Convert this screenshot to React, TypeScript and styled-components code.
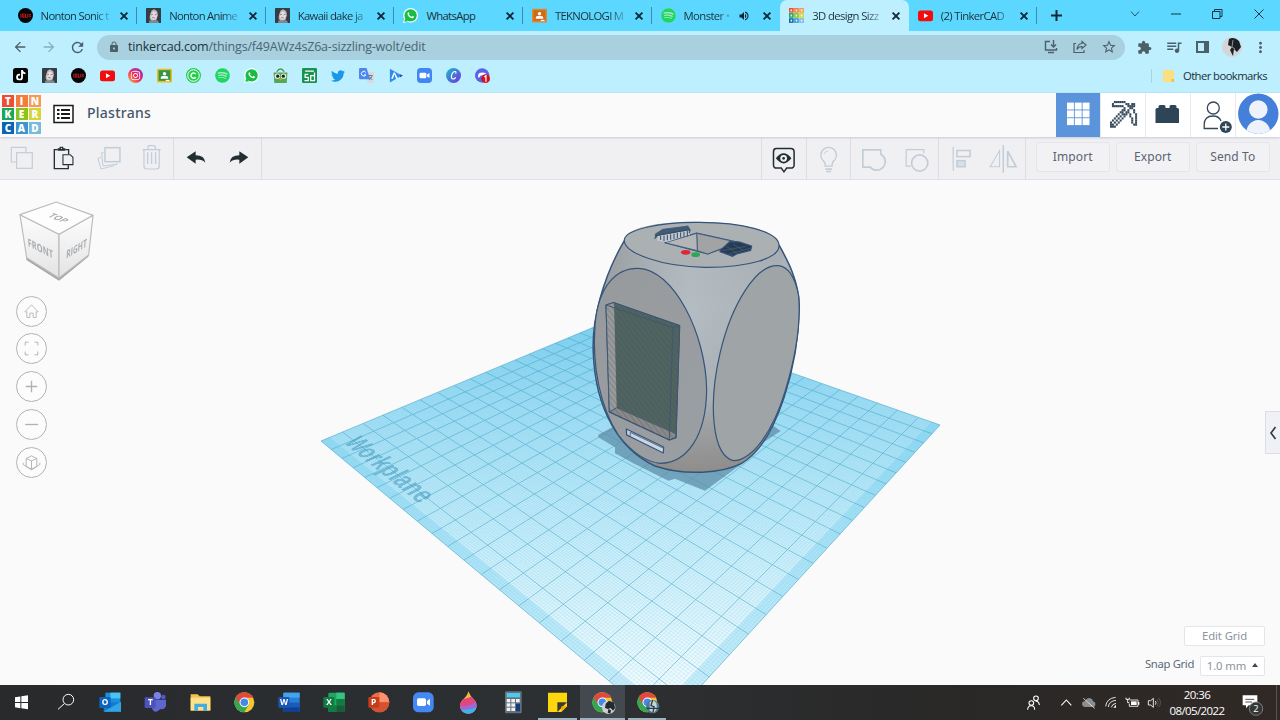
import React from "react";
import styled, { createGlobalStyle } from "styled-components";
import { FaInstagram, FaSpotify, FaTiktok, FaTwitter } from "react-icons/fa";
import { MdArrowBack, MdArrowForward, MdExtension, MdLock, MdMoreVert, MdQueueMusic, MdRefresh, MdStarBorder, MdVolumeUp } from "react-icons/md";

const Global = createGlobalStyle`
  * { box-sizing: border-box; }
  body { margin: 0; overflow: hidden; }
`;

const Screen = styled.div`
  width: 1280px;
  height: 720px;
  display: flex;
  flex-direction: column;
  overflow: hidden;
  background: #fafafa;
  font-family: "Open Sans", "Noto Sans", sans-serif;
  color: #1c3038;
`;

/* ---------- browser chrome ---------- */

const TabStrip = styled.div`
  height: 31px;
  flex: none;
  display: flex;
  padding-left: 8.6px;
  background: #5cd7ff;
`;

const TabBox = styled.div<{ $active?: boolean; $line?: boolean }>`
  width: 128.6px;
  height: 31px;
  display: flex;
  align-items: center;
  padding: 0 8px 0 9px;
  position: relative;
  background: ${(p) => (p.$active ? "#bdefff" : "transparent")};
  border-radius: 7px 7px 0 0;
  &::after {
    content: "";
    position: absolute;
    right: 0;
    top: 7px;
    height: 17px;
    width: 1px;
    background: ${(p) => (p.$line ? "#3c8da8" : "transparent")};
  }
`;

const Favicon = styled.span`
  width: 15px;
  height: 15px;
  margin-right: 8px;
  display: flex;
  flex: none;
`;

const TabTitle = styled.span<{ $fade: boolean; $gap: number }>`
  flex: 1;
  white-space: nowrap;
  font-size: 11.3px;
  line-height: 16px;
  letter-spacing: ${(p) => p.$gap}px;
  ${(p) => p.$fade && "mask-image: linear-gradient(90deg, #000 68%, rgba(0,0,0,.25) 88%);"}
`;

const WindowControls = styled.div`
  margin-left: auto;
  display: flex;
  align-items: center;
  height: 27px;
`;

const ControlCell = styled.span<{ $w: number }>`
  width: ${(p) => p.$w}px;
  display: flex;
  justify-content: center;
`;

const AudioCell = styled.span`
  width: 27px;
  display: flex;
  padding-left: 3px;
`;

const NewTab = styled.span`
  width: 38px;
  display: flex;
  align-items: center;
  justify-content: center;
`;

const AddressRow = styled.div`
  height: 32px;
  flex: none;
  display: flex;
  align-items: center;
  background: #bdefff;
  padding-left: 5px;
  color: #4c6069;
`;

const NavCell = styled.span<{ $w: number; $dim?: boolean }>`
  width: ${(p) => p.$w}px;
  display: flex;
  justify-content: center;
  opacity: ${(p) => (p.$dim ? 0.45 : 1)};
`;

const Omnibox = styled.div`
  width: 1028px;
  height: 25px;
  margin-left: 5px;
  border-radius: 13px;
  background: #a8d0df;
  display: flex;
  align-items: center;
  padding: 0 2px 0 11px;
`;

const Url = styled.span`
  flex: 1;
  margin-left: 8px;
  font-size: 12.5px;
  line-height: 18px;
  letter-spacing: -0.19px;
  color: #4b6571;
  b {
    font-weight: 400;
    color: #1d343e;
  }
`;

const Bookmarks = styled.div`
  height: 30px;
  flex: none;
  display: flex;
  align-items: center;
  padding: 0 13px 4px 6px;
  background: #bdefff;
  border-bottom: 1px solid #b4e8f8;
`;

const BookmarkCell = styled.span`
  width: 28.87px;
  display: flex;
  justify-content: center;
`;

const OtherBookmarks = styled.span`
  margin-left: auto;
  height: 14px;
  padding-left: 11px;
  border-left: 1px solid #9bd8ea;
  display: flex;
  align-items: center;
  gap: 9px;
  font-size: 11.3px;
  letter-spacing: -0.58px;
  white-space: nowrap;
`;

/* ---------- editor ---------- */

const Header = styled.header`
  height: 44px;
  flex: none;
  display: flex;
  align-items: center;
  background: #fafafa;
  position: relative;
  box-shadow: 0 1px 2px #c8cad6;
`;

const LogoGrid = styled.div`
  width: 39px;
  height: 39px;
  margin: -2px 12px 0 2px;
  display: grid;
  grid-template-columns: repeat(3, 12px);
  grid-auto-rows: 12px;
  gap: 1.5px;
`;

const LogoTile = styled.span<{ $c: string }>`
  background: ${(p) => p.$c};
  color: #fff;
  font: 800 10px/12.5px "Open Sans", sans-serif;
  text-align: center;
`;

const DesignName = styled.span`
  margin-left: 13px;
  margin-top: -5px;
  font: 500 14px/20px "Noto Sans", sans-serif;
  letter-spacing: 0.25px;
  color: #46566a;
`;

const HeaderCells = styled.div`
  margin-left: auto;
  display: flex;
  height: 44px;
`;

const HeaderCell = styled.span<{ $on?: boolean }>`
  width: 45px;
  height: 44px;
  border-right: 1px solid #e9eaef;
  background: ${(p) => (p.$on ? "#5b94da" : "#fff")};
  &:last-child {
    width: 44px;
    border: 0;
  }
`;

const Toolbar = styled.div`
  height: 43px;
  flex: none;
  display: flex;
  background: #f0f0f3;
  border-bottom: 1px solid #dfe1e8;
`;

const ToolGroup = styled.div<{ $push?: boolean; $w?: number }>`
  display: flex;
  width: ${(p) => (p.$w ? `${p.$w}px` : "auto")};
  margin-left: ${(p) => (p.$push ? "auto" : "0")};
  border-left: ${(p) => (p.$push ? "1px solid #dcdee5" : "0")};
  border-right: 1px solid #dcdee5;
`;

const Actions = styled.div`
  display: flex;
  gap: 5.5px;
  padding: 5px 10px 0 10px;
`;

const ActionButton = styled.button`
  width: 74.5px;
  height: 30px;
  padding: 0 0 1px;
  border: 1px solid #e4e6eb;
  border-radius: 3px;
  background: #f2f2f5;
  color: #5a6474;
  font: 12px "Noto Sans", sans-serif;
  letter-spacing: 0.1px;
`;

const Viewport = styled.main`
  height: 505px;
  flex: none;
  display: flex;
  justify-content: space-between;
  position: relative;
  background: #fafafa;
`;

const Scene = styled.svg`
  position: absolute;
  left: 0;
  top: 0;
`;

const PlaneLabel = styled.span`
  position: absolute;
  left: 0;
  top: 0;
  width: 1000px;
  height: 1000px;
  padding: 16px 0 0 44px;
  font: 700 61px/66px "Liberation Sans", sans-serif;
  letter-spacing: 0.5px;
  color: #3a93b8;
  opacity: 0.5;
  transform-origin: 0 0;
`;

const ViewControls = styled.nav`
  position: relative;
  width: 110px;
  padding: 20px 0 0 16px;
  display: flex;
  flex-direction: column;
  gap: 6.8px;
`;

const Cube = styled.svg`
  margin-bottom: -3.3px;
`;

const BottomControls = styled.div`
  position: relative;
  align-self: flex-end;
  padding-right: 15px;
  display: flex;
  flex-direction: column;
  align-items: flex-end;
  gap: 9.5px;
  padding-bottom: 9.5px;
  font: 11.3px "Noto Sans", sans-serif;
  letter-spacing: -0.1px;
  color: #5c6b7c;
`;

const GridBox = styled.span<{ $w: number }>`
  width: ${(p) => p.$w}px;
  height: 20px;
  display: flex;
  align-items: center;
  justify-content: center;
  gap: 6px;
  padding-bottom: 1px;
  border: 1px solid #e3e5ea;
  border-radius: 2px;
  background: #fff;
  color: #8b939d;
`;

const SnapRow = styled.div`
  display: flex;
  align-items: center;
  gap: 6px;
`;

const SnapLabel = styled.span`
  letter-spacing: -0.35px;
  margin-top: -4px;
`;

const PanelHandle = styled.span`
  position: absolute;
  right: 0;
  top: 231px;
  width: 15px;
  height: 43px;
  border: 1px solid #dcdee6;
  border-right: 0;
  background: #f0f1f4;
  display: flex;
  align-items: center;
  justify-content: center;
`;

/* ---------- taskbar ---------- */

const Taskbar = styled.footer`
  height: 35px;
  flex: none;
  display: flex;
  background: linear-gradient(90deg, #282a2c, #2d3033 45%, #292827 75%, #302926);
  color: #fff;
`;

const TaskCell = styled.span<{ $open?: boolean; $active?: boolean }>`
  width: 44.7px;
  height: 35px;
  flex: none;
  position: relative;
  background: ${(p) => (p.$active ? "#43494e" : "transparent")};
  &:first-child {
    margin-left: -1px;
  }
  &::after {
    content: "";
    position: absolute;
    bottom: 0;
    left: ${(p) => (p.$active ? 0 : 3)}px;
    right: ${(p) => (p.$active ? 0 : 3)}px;
    height: 2px;
    background: ${(p) => (p.$open ? "#9db4c0" : "transparent")};
  }
`;

const Tray = styled.div`
  margin-left: auto;
  display: flex;
  align-items: center;
`;

const TraySvg = styled.svg`
  margin-right: -4px;
`;

const Clock = styled.span`
  width: 64px;
  text-align: center;
  font-size: 11.5px;
  line-height: 16px;
  letter-spacing: -0.6px;
  white-space: nowrap;
`;

const Notification = styled.span`
  width: 47px;
  height: 35px;
`;

const DesktopEdge = styled.span`
  width: 4px;
  height: 35px;
  border-left: 1px solid #5b5654;
`;

/* ---------- small glyphs ---------- */

const Close = () => (
  <svg width="10" height="10" viewBox="0 0 10 10">
    <path d="M1.6 1.6 8.4 8.4M8.4 1.6 1.6 8.4" stroke="#0f2530" strokeWidth="1.8" />
  </svg>
);

const Glyph = ({ children, size = 15 }: { children: React.ReactNode; size?: number }) => (
  <svg width={size} height={size} viewBox="0 0 24 24">
    {children}
  </svg>
);

const Idlix = ({ size }: { size?: number }) => (
  <Glyph size={size}>
    <circle cx="12" cy="12" r="12" fill="#050505" />
    <path d="M4.500 9v6M7 9.500h2.500v5H7zM12 9v6h2M15.500 9v6M17.500 9.500l3 5M20.500 9.500l-3 5" stroke="#a5151b" strokeWidth="1.8" fill="none" />
  </Glyph>
);

const AnimeFace = ({ size }: { size?: number }) => (
  <Glyph size={size}>
    <rect width="24" height="24" rx="1" fill="#353c43" />
    <path d="M7 9 9 4l4-2 5 3 1 6-2 7-4 3H9l-3-4 0-4z" fill="#b9b9bd" />
    <path d="m8 9 4-4 4 2 2 4-2 6-4 2-4-3z" fill="#e6dcdd" />
    <path d="m8 11 3-1m3 1 3-1M10 15l4 1" stroke="#7c6468" strokeWidth="1.300" />
    <path d="m5 20 5 0 4-1 5 1 2 4H5z" fill="#85868d" />
  </Glyph>
);

const Youtube = ({ size }: { size?: number }) => (
  <Glyph size={size}>
    <rect y="4" width="24" height="17" rx="4" fill="#f40b0b" />
    <path d="m9.5 8.5 7 4-7 4z" fill="#fff" />
  </Glyph>
);

const WhatsApp = ({ size = 15 }: { size?: number }) => (
  <Glyph size={size}>
    <circle cx="12.2" cy="11.8" r="11.8" fill="#f5fff8" />
    <path d="m0 24 2-7 6 5z" fill="#f5fff8" />
    <circle cx="12.2" cy="11.8" r="9.8" fill="#18bd45" />
    <path d="m2 22 2-6 4 5z" fill="#18bd45" />
    <path d="M7.5 7.5c1-1.5 2-1 2.7.8.5 1-1 1.4-.6 2.2 1 1.8 2 2.7 3.8 3.5.9.4 1.3-1.7 2.2-1.3 2.1 1 2.6 1.3 1.7 2.6-2.7 3.5-12-2.8-9.8-7.8z" fill="#fff" />
  </Glyph>
);

const Classroom = ({ size, main, edge }: { size?: number; main: string; edge: string }) => (
  <Glyph size={size}>
    <rect y="1" width="24" height="22" rx="1.5" fill={edge} />
    <rect x="2.5" y="3.5" width="19" height="17" fill={main} />
    <circle cx="12" cy="9" r="2.7" fill="#fff" />
    <path d="M6 16q0-3.5 6-3.5t6 3.5v1H6z" fill="#fff" />
    <path d="M14 20h6" stroke="#fff" strokeWidth="2" />
  </Glyph>
);

const Spotify = ({ size = 15 }: { size?: number }) => (
  <Glyph size={size}>
    <circle cx="12" cy="12" r="11.500" fill="#a5e9c4" />
    <FaSpotify size={24} color="#1fd760" />
  </Glyph>
);

const tiles: [string, string][] = [
  ["T", "#f04d35"], ["I", "#f27e3d"], ["N", "#f59b57"],
  ["K", "#1ba757"], ["E", "#8cc518"], ["R", "#d2d63c"],
  ["C", "#0966b4"], ["A", "#3f96cf"], ["D", "#79badf"],
];

const TinkerMini = () => (
  <Glyph>
    {tiles.map(([, c], i) => (
      <g key={i}>
        <rect x={(i % 3) * 8.2} y={Math.floor(i / 3) * 8.2} width="7.4" height="7.4" fill={c} />
        <rect x={(i % 3) * 8.2 + 2.4} y={Math.floor(i / 3) * 8.2 + 2.2} width="2.6" height="3.2" fill="#fff" opacity=".85" />
      </g>
    ))}
  </Glyph>
);

const tabs = [
  { icon: <Idlix />, title: "Nonton Sonic t", fade: true, line: true, gap: -0.72 },
  { icon: <AnimeFace />, title: "Nonton Anime", fade: true, line: true, gap: -0.72 },
  { icon: <AnimeFace />, title: "Kawaii dake ja", fade: true, line: true, gap: -0.68 },
  { icon: <WhatsApp />, title: "WhatsApp", fade: false, line: true, gap: -0.65 },
  { icon: <Classroom main="#cf6a17" edge="#d88a36" />, title: "TEKNOLOGI M", fade: true, line: true, gap: -0.68 },
  { icon: <Spotify />, title: "Monster •", fade: true, line: false, gap: -0.6, audio: true },
  { icon: <TinkerMini />, title: "3D design Sizz", fade: true, line: false, gap: -0.6, active: true },
  { icon: <Youtube />, title: "(2) TinkerCAD", fade: true, line: true, gap: -0.62 },
];

const bookmarks = [
  <Glyph><rect width="24" height="24" rx="4" fill="#050505" /><g transform="translate(4 3)"><FaTiktok size={17} color="#fff" /></g></Glyph>,
  <AnimeFace />,
  <Idlix />,
  <Youtube />,
  <Glyph>
    <defs><linearGradient id="ig" x1="0" y1="1" x2="1" y2="0"><stop stopColor="#ffb52e" /><stop offset=".5" stopColor="#ee2864" /><stop offset="1" stopColor="#8a32d0" /></linearGradient></defs>
    <circle cx="12" cy="12" r="12" fill="url(#ig)" />
    <g transform="translate(3.5 3.5)"><FaInstagram size={17} color="#fff" /></g>
  </Glyph>,
  <Classroom main="#379447" edge="#efbb1e" />,
  <Glyph>
    <circle cx="12" cy="12" r="12" fill="#21cf4c" /><circle cx="12" cy="12" r="9.2" fill="none" stroke="#fff" strokeWidth="1.6" />
    <path d="M15.5 9.5a4.2 4.2 0 1 0 0 5.2" fill="none" stroke="#fff" strokeWidth="2.5" />
  </Glyph>,
  <Spotify />,
  <WhatsApp />,
  <Glyph>
    <path d="M6 6q6-9 12 0" fill="none" stroke="#3b8f44" strokeWidth="2" />
    <path d="M1 7h22l-1 17H2z" fill="#58a552" /><circle cx="7" cy="13" r="4.300" fill="#e9eee3" /><circle cx="17" cy="13" r="4.300" fill="#e9eee3" />
    <circle cx="7.500" cy="13" r="2.6" fill="#192b20" /><circle cx="16.500" cy="13" r="2.6" fill="#192b20" /><path d="m9.5 17 5 0-2.5 3z" fill="#f0a62f" />
  </Glyph>,
  <Glyph>
    <rect width="24" height="24" rx="2" fill="#14944f" />
    <path d="M10 10H5v5h5v5H4M20 7v13h-6v-8h6M5 5h14" fill="none" stroke="#fff" strokeWidth="2" />
  </Glyph>,
  <FaTwitter size={14} color="#1996ea" />,
  <Glyph>
    <path d="M9 6h13q2 0 2 2v14q0 2-2 2h-8z" fill="#d7dbdf" /><path d="M2 0h10l6 18H2q-2 0-2-2V2q0-2 2-2z" fill="#4b87ee" />
    <path d="M11 7.2a3.8 3.8 0 1 0 0 3.8H8" fill="none" stroke="#fff" strokeWidth="1.6" /><path d="M15 12h7m-4-1v2m3-1q-1 5-5 7m1-5 4 5" stroke="#63737e" strokeWidth="1.3" fill="none" />
  </Glyph>,
  <Glyph>
    <path d="M3 1 22 12 3 23z" fill="#2e8ce9" /><path d="m5 17 4-10h2l5 10h-3l-3-7-2 7z" fill="#fff" /><path d="M19 10l5 2-5 3z" fill="#1559a9" />
  </Glyph>,
  <Glyph><rect width="24" height="24" rx="6" fill="#4186f5" /><rect x="4" y="7.5" width="11" height="9" rx="2" fill="#fff" /><path d="m16 10.5 4-2.5v8l-4-2.5z" fill="#fff" /></Glyph>,
  <Glyph>
    <defs><linearGradient id="cv" x1="0" y1="0" x2="1" y2="1"><stop stopColor="#12c2cf" /><stop offset="1" stopColor="#7b2be0" /></linearGradient></defs>
    <circle cx="12" cy="12" r="12" fill="url(#cv)" />
    <path d="M15.5 9c1.5-4-2-4.500-4.500-1.500-3 3.500-3.500 9.500 0 10 2 .3 3.500-1 4.500-2.500" fill="none" stroke="#fff" strokeWidth="1.8" />
  </Glyph>,
  <Glyph>
    <circle cx="11.500" cy="12" r="11.500" fill="#5865e8" /><path d="M5 15q-1-5 2-7 5-2 10 0v5l-4-1-4 0-2 3z" fill="#fff" />
    <circle cx="17" cy="17" r="7" fill="#d3121e" /><path d="m15 14.500 2.500-2V22" fill="none" stroke="#fff" strokeWidth="2" />
  </Glyph>,
];

/* ---------- toolbar drawings ---------- */

const Tool = ({ x, w = 131, on, children }: { x: number; w?: number; on?: boolean; children: React.ReactNode }) => (
  <svg width={w / 3} height="42" viewBox={`${x} 141 ${w} 126`} fill="none" stroke={on ? "#222e31" : "#c3cdd7"} strokeWidth="3.6">
    {children}
  </svg>
);

const WideTool = ({ x, w, on, children }: { x: number; w: number; on?: boolean; children: React.ReactNode }) => (
  <svg width={w / 2.958} height="42" viewBox={`${x} 139 ${w} 124.200`} fill="none" stroke={on ? "#222e31" : "#c3cdd7"} strokeWidth="3.6">
    {children}
  </svg>
);

const LeftTools = () => (
  <>
    <ToolGroup $w={174}>
      <Tool x={0} w={130}><path d="M48 216H34v-44h44v14" /><rect x="50" y="188" width="47" height="47" /></Tool>
      <Tool x={130} w={130} on>
        <path d="M174 179h-10v57h42v-10M197 179h10v13" strokeWidth="4" /><path d="M190 194h22l8 8v22h-30z" strokeWidth="3.2" />
        <path d="M174 182v-7h6v-5h11v5h6v7z" fill="#222e31" stroke="none" /><circle cx="185.500" cy="175" r="2" fill="#f0f0f3" stroke="none" />
      </Tool>
      <Tool x={260} w={130}>
        <rect x="314" y="173" width="45" height="42" strokeWidth="4.500" /><path d="M310 188h-6l4 40 42-5v-5M303 202l-10 3 9 32 40-10" strokeWidth="3" />
      </Tool>
      <Tool x={390} w={130}>
        <path d="M428 179h54M444 178v-8q0-3 4-3h14q4 0 4 3v8M432 180v48q0 9 9 9h28q9 0 9-9v-48" />
        <path d="M443 187v35M455 187v35M467 187v35" strokeWidth="4" />
      </Tool>
    </ToolGroup>
    <ToolGroup $w={88}>
      <Tool x={522} on><path d="M560 202l27-18v12q27 0 29 22-10-11-29-9v12z" fill="#222e31" stroke="none" /></Tool>
      <Tool x={653} w={128} on><path d="M744 202l-27-18v12q-27 0-29 22 10-11 29-9v12z" fill="#222e31" stroke="none" /></Tool>
    </ToolGroup>
  </>
);

const RightTools = () => (
  <>
    <ToolGroup $push $w={46}>
      <WideTool x={37} w={129} on>
        <path d="M79 173h43q10 0 10 10v38q0 10-10 10h-12l-8 11-8-11H80q-9 0-9-10v-38q0-10 8-10z" strokeWidth="4.500" />
        <path d="M78 202q23-30 46 0-23 30-46 0z" fill="#222e31" stroke="none" />
        <circle cx="101" cy="202" r="10" fill="#f0f0f3" stroke="none" /><circle cx="101" cy="202" r="4" fill="#222e31" stroke="none" />
      </WideTool>
    </ToolGroup>
    <ToolGroup $w={44}>
      <WideTool x={168} w={127}>
        <path d="M222 225q1-10-7-17a23 23 0 1 1 34 0q-8 7-7 17z" strokeWidth="4" /><path d="M222 234h20M225 241h14" strokeWidth="5" /><path d="M218 190q3-9 13-10" strokeWidth="2.500" />
      </WideTool>
    </ToolGroup>
    <ToolGroup $w={88}>
      <WideTool x={298} w={130}><path d="M333 177h53v13a25 25 0 1 1-31 38h-22z" strokeWidth="5" /></WideTool>
      <WideTool x={428} w={127}><path d="M478 225h-14v-49h52v12" strokeWidth="3.600" /><circle cx="504" cy="216" r="24" strokeWidth="5" /></WideTool>
    </ToolGroup>
    <ToolGroup $w={87}>
      <WideTool x={558} w={129}><path d="M600 168v71" strokeWidth="3.600" /><rect x="611" y="179" width="39" height="18" strokeWidth="4.500" /><rect x="611" y="209" width="24" height="18" strokeWidth="4.500" fill="#d9dfe5" /></WideTool>
      <WideTool x={687} w={125}><path d="M750 163v82" strokeWidth="4.500" /><path d="M739 179v48h-28z" strokeWidth="3" /><path d="M763 181v46h25z" strokeWidth="5" /></WideTool>
    </ToolGroup>
  </>
);

const pick = [
  "..######......",
  ".#......##.##.",
  ".######..####.",
  ".......#..##..",
  "......##.#..#.",
  ".....##.##..#.",
  "....#.###.#..#",
  "...#.#.#..#..#",
  "..#.#.#....#.#",
  ".#.#.#.....#.#",
  "#.#.#......#.#",
  "##.#........##",
  "###...........",
];

const HeaderModes = () => (
  <HeaderCells>
    <HeaderCell $on>
      <svg width="44" height="44" viewBox="0 0 44 44">
        {Array.from({ length: 9 }, (_, i) => <rect key={i} x={11 + (i % 3) * 7.8} y={9.6 + Math.floor(i / 3) * 7.8} width="6.900" height="6.900" fill="#fff" />)}
      </svg>
    </HeaderCell>
    <HeaderCell>
      <svg width="44" height="44" viewBox="0 0 44 44">
        {pick.map((r, y) => r.split("").map((c, x) => c === "#" && <rect key={`${x}-${y}`} x={9 + x * 1.93} y={8 + y * 2.05} width="2" height="2.1" fill="#34485a" />))}
      </svg>
    </HeaderCell>
    <HeaderCell>
      <svg width="44" height="44" viewBox="0 0 44 44">
        <path d="M9.500 30V16.500q0-1.500 1.500-1.500h1.500v-1.500q0-1.500 1.500-1.500h4q1.500 0 1.500 1.500V15h4v-1.500q0-1.500 1.500-1.500h4q1.500 0 1.500 1.500V15h1q1.500 0 1.500 1.500V30z" fill="#2e4558" />
      </svg>
    </HeaderCell>
    <HeaderCell>
      <svg width="44" height="44" viewBox="0 0 44 44" fill="none" stroke="#34485a" strokeWidth="1.300">
        <circle cx="22.300" cy="15" r="6" /><path d="M27 35.500H13.200v-4q0-8.500 8.800-8.500 6 0 8 5" />
        <circle cx="34.800" cy="34" r="6" fill="#2e4558" stroke="none" /><path d="M31.300 34h7M34.800 30.500v7" stroke="#fff" />
      </svg>
    </HeaderCell>
    <HeaderCell>
      <svg width="44" height="44" viewBox="0 0 44 44">
        <defs><clipPath id="av"><circle cx="22.300" cy="20.700" r="20.200" /></clipPath></defs>
        <g clipPath="url(#av)"><rect width="44" height="44" fill="#4480da" /><circle cx="22.300" cy="16.500" r="9.300" fill="#edf2fb" /><ellipse cx="22.300" cy="40" rx="12" ry="13" fill="#edf2fb" /></g>
      </svg>
    </HeaderCell>
  </HeaderCells>
);

/* ---------- workplane projection ---------- */

const corner = { left: [321, 261], back: [624.7, 134.3], right: [940, 245], front: [663.7, 546.5] };

function squareToQuad() {
  const [x0, y0] = corner.left, [x1, y1] = corner.back, [x2, y2] = corner.right, [x3, y3] = corner.front;
  const dx1 = x1 - x2, dx2 = x3 - x2, dx3 = x0 - x1 + x2 - x3;
  const dy1 = y1 - y2, dy2 = y3 - y2, dy3 = y0 - y1 + y2 - y3;
  const det = dx1 * dy2 - dx2 * dy1;
  const g = (dx3 * dy2 - dx2 * dy3) / det;
  const h = (dx1 * dy3 - dx3 * dy1) / det;
  return { a: x1 - x0 + g * x1, b: x3 - x0 + h * x3, c: x0, d: y1 - y0 + g * y1, e: y3 - y0 + h * y3, f: y0, g, h };
}

const m = squareToQuad();
const at = (u: number, v: number) => {
  const w = m.g * u + m.h * v + 1;
  return `${((m.a * u + m.b * v + m.c) / w).toFixed(2)} ${((m.d * u + m.e * v + m.f) / w).toFixed(2)}`;
};
const gridPath = (n: number) => {
  let d = "";
  for (let i = 0; i <= n; i++) d += `M${at(i / n, 0)}L${at(i / n, 1)}M${at(0, i / n)}L${at(1, i / n)}`;
  return d;
};
const major = gridPath(20);
const minor = gridPath(200);
const quad = (u0: number, v0: number, u1: number, v1: number) => `M${at(u0, v0)}L${at(u1, v0)}L${at(u1, v1)}L${at(u0, v1)}Z`;

/* The label box is 1000 units square; its x axis follows v and its y axis runs from u = 0.1 down to the edge. */
const k = 1000;
const labelMatrix = () => {
  const top = 0.1;
  const c0 = m.a * top + m.c, f0 = m.d * top + m.f, w0 = m.g * top + 1;
  return `matrix3d(${[m.b / k, m.e / k, 0, m.h / k, -m.a / k, -m.d / k, 0, -m.g / k, 0, 0, 1, 0, c0, f0, 0, w0].join(",")})`;
};

const Workspace = () => (
  <Scene width="1280" height="505" viewBox="0 0 1280 505">
    <defs>
      <linearGradient id="plane" gradientUnits="userSpaceOnUse" x1="0" y1="134" x2="0" y2="505">
        <stop stopColor="#86d3f3" /><stop offset=".25" stopColor="#a9e1f6" /><stop offset=".6" stopColor="#caeefa" /><stop offset="1" stopColor="#f0fbfe" />
      </linearGradient>
      <linearGradient id="body" x1="0" y1="0" x2="0" y2="1">
        <stop stopColor="#a8adb2" /><stop offset=".35" stopColor="#b0b8be" /><stop offset=".7" stopColor="#9ea5aa" /><stop offset="1" stopColor="#8f9091" />
      </linearGradient>
      <linearGradient id="neck" x1="0" y1="0" x2="1" y2="0">
        <stop stopColor="#8e9092" stopOpacity=".7" /><stop offset=".5" stopColor="#b8c1c8" stopOpacity=".5" /><stop offset="1" stopColor="#a3a9ae" stopOpacity=".5" />
      </linearGradient>
      <linearGradient id="foot" gradientUnits="userSpaceOnUse" x1="0" y1="560" x2="0" y2="790">
        <stop stopColor="#8d8a88" stopOpacity="0" /><stop offset="1" stopColor="#8d8a88" stopOpacity=".9" />
      </linearGradient>
      <linearGradient id="lface" x1="0" y1="0" x2="1" y2="1"><stop stopColor="#979a9d" /><stop offset="1" stopColor="#9a9fa3" /></linearGradient>
      <pattern id="hatch" width="12" height="12" patternUnits="userSpaceOnUse" patternTransform="rotate(-38)">
        <rect width="6" height="12" fill="#40524f" opacity=".2" />
      </pattern>
    </defs>
    <path d={quad(0, 0, 1, 1)} fill="url(#plane)" />
    <path d={minor} stroke="#62c0e2" strokeWidth=".5" opacity=".38" />
    <path d={quad(0, 0, 0.02, 1) + quad(0, 0.98, 1, 1)} fill="#58c5ea" opacity=".26" />
    <path d={major} stroke="#3e9fc2" strokeWidth=".85" opacity=".58" />
    <g transform="translate(570 30) scale(.33333)" stroke="#36547a" strokeWidth="3.600" strokeLinejoin="round">
      <path d="M85 674 185 620H570L632 663 555 714 520 758 405 842 315 806 295 812 190 760 135 730V712L85 682z" fill="#5b8ba5" fillOpacity=".72" stroke="none" />
      <path d="M163 92C100 200 64 330 70 430 76 600 150 720 255 768 345 798 455 790 515 760 625 695 685 460 688 290 686 210 652 150 627 105 630 20 163 10 163 92z" fill="url(#body)" stroke="none" />
      <path d="M163 97C130 160 88 250 80 310 100 220 150 175 205 175 310 180 400 360 410 540 406 680 360 735 255 768 345 798 455 790 515 760 430 740 410 600 450 430 490 280 570 165 625 167L643 135 627 105Q600 170 400 172 200 170 163 97z" fill="url(#neck)" stroke="none" />
      <path d="M255 768C345 798 455 790 515 760L470 560H370z" fill="url(#foot)" stroke="none" />
      <path d="M163 92C100 200 64 330 70 430 76 600 150 720 255 768 345 798 455 790 515 760 625 695 685 460 688 290 686 210 652 150 627 105" fill="none" strokeWidth="4.500" />
      <path d="M75 345C85 225 140 174 205 175 310 178 408 370 410 540 408 680 350 760 270 760 225 755 180 720 145 675 90 590 66 470 75 345z" fill="url(#lface)" />
      <path d="M625 167C560 162 485 280 450 430 415 580 425 735 490 752 550 750 610 660 645 545 680 430 692 330 686 257 675 200 655 170 625 167z" fill="#9fa5a7" />
      <path d="M163 92C160 60 270 35 390 37 515 37 625 65 627 105 630 145 535 173 405 172 275 170 165 130 163 92z" fill="#abb0b3" />
      <path d="M285 98 380 69 505 97 413 132z" fill="#a9acad" strokeWidth="3.500" />
      <path d="m380 70 2 52 31 10 90-35z" fill="#a1a3a4" strokeWidth="2.500" /><path d="m380 70-95 28 97 24z" fill="#b3b5b6" strokeWidth="2.500" />
      <path d="m256 72 22-14 76-10 8 14-78 16-28 4z" fill="#415a76" strokeWidth="2" />
      <path d="M262 92V77L360 60V74L290 96z" fill="#c2c8ce" stroke="none" />
      <path d="m254 87 5-10 99-18v11M272 90v-13M282 93v-16M292 91v-16M302 89v-16M312 87v-16M322 85v-16M332 83v-16M342 81v-16M352 79v-16" stroke="#324a66" fill="none" strokeWidth="3" />
      <path d="m450 122 29-27 30 1 36 12-3 13-42 11-12 7-38-14z" fill="#253c54" />
      <path d="m458 122 70-13M475 133l65-18M469 109l31 20M489 102l32 20" stroke="#4d6279" strokeWidth="2" />
      <ellipse cx="347" cy="127" rx="14" ry="7" fill="#dc2738" stroke="none" /><ellipse cx="377" cy="134" rx="13" ry="7" fill="#2fa650" stroke="none" />
      <path d="M108 285 131 278 329 347 318 683 298 690 118 606z" fill="#8c8b8a" />
      <path d="M108 285 131 278 139 591 118 606z" fill="#9b9c9e" stroke="none" /><path d="M133 281 329 347 318 669 141 592z" fill="#52666a" stroke="none" />
      <path d="M133 281 329 347 318 669 141 592z" fill="#50645f" fillOpacity=".8" stroke="none" />
      <path d="M133 281 329 347 318 683 298 690 118 606 108 285z" fill="url(#hatch)" stroke="none" />
      <path d="M108 285 131 278 329 347 318 683 298 690 118 606zM108 285l201 68 20-6M309 353l-11 337M118 606l22-13 178 78" fill="none" stroke="#3d5672" strokeWidth="2.800" />
      <path d="m169 657 112 54-1 18-110-54z" fill="#cbd5df" /><path d="m170 658 0 17 10 5 1-13 98 47" fill="none" strokeWidth="2.500" />
    </g>
  </Scene>
);

/* ---------- view navigation ---------- */

const RoundButton = ({ children }: { children: React.ReactNode }) => (
  <svg width="31" height="31" viewBox="-46.500 -46.500 93 93" fill="none" stroke="#b2b2b2" strokeWidth="3">
    <circle r="45" fill="#fcfcfc" strokeWidth="3" />
    {children}
  </svg>
);

const ViewNav = () => (
  <ViewControls>
    <Cube width="80" height="92" viewBox="48 30 240 276" stroke="#bcbcbc" strokeWidth="3.500" strokeLinejoin="round">
      <defs><linearGradient id="side" x1="0" y1="0" x2="0" y2="1"><stop stopColor="#fdfdfd" /><stop offset="1" stopColor="#e3e3e4" /></linearGradient></defs>
      <path d="M79 200v10l98 62 88-72v-8l-88 68z" fill="#a7a7a7" stroke="none" />
      <path d="M60 74 177 133V264L80 203z" fill="url(#side)" /><path d="M279 76 177 133V264L266 195z" fill="url(#side)" />
      <path d="M60 74 169 36 279 76 177 133z" fill="#fdfdfd" />
      <g fontFamily="Open Sans, sans-serif" fontWeight="700" fill="#a9adb2" stroke="none" fontSize="33">
        <text transform="matrix(.86 .43 .07 1 84 168)" textLength="88" lengthAdjust="spacingAndGlyphs">FRONT</text>
        <text transform="matrix(.84 -.5 -.06 1.020 198 206)" textLength="74" lengthAdjust="spacingAndGlyphs">RIGHT</text>
        <text transform="matrix(.93 .4 -.82 .45 142 79)" fontSize="32" textLength="52" lengthAdjust="spacingAndGlyphs">TOP</text>
      </g>
    </Cube>
    <RoundButton><path d="M-20 1 0-20 20 1H14V18H5V5H-5V18H-14V1z" strokeWidth="2.600" /></RoundButton>
    <RoundButton><path d="M-19-9V-19H-9M9-19H19V-9M19 9V19H9M-9 19H-19V9" strokeWidth="2.800" /></RoundButton>
    <RoundButton><path d="M-17 0H17M0-17V17" strokeWidth="4" /></RoundButton>
    <RoundButton><path d="M-19 0H20" strokeWidth="4" /></RoundButton>
    <RoundButton><path d="M-16-12 0-20 16-12V12L0 20-16 12zM-16-12 0-5 16-12M0-5V20M-25 1V6L0 22 25 6V1" strokeWidth="2.800" /></RoundButton>
  </ViewControls>
);

/* ---------- taskbar drawings ---------- */

const App3 = ({ children }: { children: React.ReactNode }) => (
  <svg width="44.700" height="35" viewBox="-67 -52 134 105">{children}</svg>
);

const Letter = ({ c, x = -15 }: { c: string; x?: number }) => (
  <text x={x} y="9" fontSize="25" fontWeight="700" fill="#fff" textAnchor="middle" fontFamily="Open Sans, sans-serif">{c}</text>
);

const ChromeMark = () => (
  <>
    <circle r="30" fill="#f5c62f" />
    <path d="M0 0-26-15A30 30 0 0 0 0 30L13 7z" fill="#35a753" /><path d="M0-14H26.500A30 30 0 0 0-26-15L-12 8z" fill="#df4a3e" />
    <circle r="14.500" fill="#fff" /><circle r="11.500" fill="#4788ee" />
  </>
);

const tasks: { art: React.ReactNode; open?: boolean; active?: boolean }[] = [
  { art: <path d="M-19-15-3-17.500V-1H-19zM0-18 20-21V-1H0zM-19 2H-3V17.500L-19 15zM0 2H20V21L0 18z" fill="#fff" /> },
  { art: <g fill="none" stroke="#fff" strokeWidth="3"><circle cx="6" cy="-8" r="16" /><path d="M-6 4-25 21" /></g> },
  { art: <><rect x="-15" y="-29" width="45" height="34" fill="#1990df" /><path d="M0-29H30V-12H0z" fill="#4cc2f2" /><path d="M-20 0H32V28H-20z" fill="#1679cb" /><path d="M-20 28 32-2V28z" fill="#32a5e6" /><rect x="-33" y="-16" width="34" height="33" rx="3" fill="#0c65bc" /><Letter c="O" x={-16} /></> },
  { art: <><circle cx="6" cy="-20" r="11" fill="#7b83eb" /><circle cx="24" cy="-16" r="7" fill="#5059c9" /><path d="M-10-8H32V12Q25 24 15 20-2 38-10 18z" fill="#6066d0" /><rect x="-32" y="-15" width="33" height="32" rx="3" fill="#4b53bc" /><Letter c="T" /></> },
  { art: <><path d="M-29-24H-8L-2-18H30V25H-29z" fill="#f4c24b" /><path d="M-29-14H30V24H-29z" fill="#ffe18a" /><path d="M-18 4H20V25H9V14H-7V25H-18z" fill="#45ace0" /></> },
  { art: <ChromeMark /> },
  { art: <><rect x="-18" y="-29" width="49" height="58" rx="3" fill="#2b7cd3" /><path d="M-18-29H31V-14H-18z" fill="#41a5ee" /><path d="M-18 1H31V16H-18z" fill="#185abd" /><path d="M-18 15H31V29H-18z" fill="#103f91" /><rect x="-33" y="-16" width="33" height="32" rx="3" fill="#1757b5" /><Letter c="W" x={-16} /></> },
  { art: <><rect x="-18" y="-29" width="49" height="58" rx="3" fill="#21a366" /><path d="M6-29H31V-10H6z" fill="#33c481" /><path d="M-18 9H6V29H-18zM6-10H31V9H6z" fill="#107c41" /><path d="M6 9H31V29H6z" fill="#185c37" /><rect x="-33" y="-16" width="33" height="32" rx="3" fill="#107c41" /><Letter c="X" x={-16} /></> },
  { art: <><circle r="30" fill="#ed6c47" /><path d="M0-30A30 30 0 0 1 30 0H0z" fill="#ff8f6b" /><path d="M-30 0H30A30 30 0 0 1-30 0z" fill="#d35230" /><rect x="-33" y="-16" width="33" height="32" rx="3" fill="#c43e1c" /><Letter c="P" x={-17} /></> },
  { art: <><rect x="-31" y="-30" width="62" height="60" rx="16" fill="#4688f3" /><rect x="-19" y="-12" width="27" height="23" rx="5" fill="#fff" /><path d="m11-4 9-7V10l-9-6z" fill="#fff" /></> },
  { art: <>
      <defs><clipPath id="drop"><path d="M0-33Q6-17 18-7C34 10 20 34 0 34S-34 12-18-7Q-3-18 0-33z" /></clipPath></defs>
      <g clipPath="url(#drop)"><rect x="-40" y="-40" width="80" height="80" fill="#f2bd3a" /><path d="M-40-8Q0-8 20-25L40 40H-40z" fill="#e1477c" /><path d="M-40 8Q0 22 40-14V40H-40z" fill="#9f67d7" /><path d="M-40 15Q0 34 40 5V40H-40z" fill="#36b7ea" /></g>
    </> },
  { art: <><rect x="-25" y="-33" width="50" height="66" rx="3" fill="#65717b" /><rect x="-20" y="-28" width="40" height="13" fill="#4ec9ee" />{[0, 1, 2, 3, 4, 5, 6, 7, 8].map((i) => <rect key={i} x={-20 + (i % 3) * 14} y={-10 + Math.floor(i / 3) * 13} width="11" height="10" fill="#edf1f4" />)}<rect x="8" y="3" width="12" height="24" fill="#123f7c" /></> },
  { art: <><path d="M-28-29H29V12L12 29H-28z" fill="#fdd60d" /><path d="M0 0H29L0 29z" fill="#383838" /><path d="M12 29V12H29z" fill="#f0b000" /></>, open: true },
  { art: <><ChromeMark /><circle cx="19" cy="15" r="20" fill="#ced0d1" /><path d="m10 4 10-9 15 6 3 16-6 8-7-8-8 3-9-3z" fill="#222a31" /><path d="m18 20 8 4-2 10-8-3z" fill="#222a31" /></>, open: true, active: true },
  { art: <><ChromeMark /><circle cx="16" cy="13" r="20" fill="#4d7890" /><path d="m7 0 9-8 11 10 2 17-9 12-13-6z" fill="#c9d4da" /><path d="m16-7-5 17 9 3-3 18M-2 18h38" stroke="#253b48" strokeWidth="4" fill="none" /></>, open: true },
];

const TrayIcons = () => (
  <TraySvg width="146" height="35" viewBox="66 209 438 105" fill="none" stroke="#fff" strokeWidth="3.200">
    <circle cx="91" cy="263" r="7" /><path d="M80 283q0-12 11-12 10 0 10 12" /><circle cx="105" cy="249" r="7" /><path d="M104 258q10-1 11 11" />
    <path d="m181 270 15-16 15 16" />
    <path d="M253 275q-10-2-10-10 1-8 10-8 4-11 15-8 7 2 8 9 8 2 7 10-1 7-7 7z" fill="#8b8e90" stroke="none" /><path d="m247 249 34 30" stroke="#d7d7d7" strokeWidth="3" />
    <path d="M314 273q3-24 30-27M322 275q2-18 23-20M331 276q2-10 14-12" strokeWidth="2.600" /><path d="m337 277 8-9v9z" fill="#fff" stroke="none" />
    <path d="M386 254h25v19h-26v-8" strokeWidth="2.500" /><path d="M390 258h17v11h-17z" fill="#fff" stroke="none" /><path d="M413 260v8" strokeWidth="4" /><path d="M375 247v5h10v-5M380 252v10h5" strokeWidth="2.800" />
    <path d="M442 256h7l8-7v27l-8-7h-7z" strokeWidth="2.600" /><path d="M463 257q4 5 0 11" strokeWidth="2.500" /><path d="M468 252q8 10 0 21M473 248q11 14 0 28" stroke="#686868" strokeWidth="2" />
  </TraySvg>
);

export default function App() {
  return (
    <Screen>
      <Global />
      <TabStrip>
        {tabs.map((t) => (
          <TabBox key={t.title} $active={t.active} $line={t.line}>
            <Favicon>{t.icon}</Favicon>
            <TabTitle $fade={t.fade} $gap={t.gap}>{t.title}</TabTitle>
            {t.audio && <AudioCell><MdVolumeUp size={12} color="#112233" /></AudioCell>}
            <Close />
          </TabBox>
        ))}
        <NewTab><svg width="11" height="11"><path d="M0 5.500H11M5.500 0V11" stroke="#102a35" strokeWidth="2" /></svg></NewTab>
        <WindowControls>
          <ControlCell $w={41.5}><svg width="10" height="6"><path d="M1 .5 5 5 9 .5" stroke="#28566a" fill="none" /></svg></ControlCell>
          <ControlCell $w={41.5}><svg width="10" height="2"><path d="M0 1H10" stroke="#153541" /></svg></ControlCell>
          <ControlCell $w={41.5}><svg width="11" height="10"><path d="M.5 2.500H8V9.500H.5zM2.500 2V.5H10V7.500H8" stroke="#153541" fill="none" /></svg></ControlCell>
          <ControlCell $w={41.5}><svg width="10" height="10"><path d="M.5 .5 9.500 9.500M9.500 .5 .5 9.500" stroke="#153541" /></svg></ControlCell>
        </WindowControls>
      </TabStrip>
      <AddressRow>
        <NavCell $w={29}><MdArrowBack size={16} /></NavCell>
        <NavCell $w={29} $dim><MdArrowForward size={16} /></NavCell>
        <NavCell $w={29}><MdRefresh size={17} /></NavCell>
        <Omnibox>
          <MdLock size={12} />
          <Url><b>tinkercad.com</b>/things/f49AWz4sZ6a-sizzling-wolt/edit</Url>
          <NavCell $w={29}><svg width="14" height="14" fill="none" stroke="#4c6069" strokeWidth="1.400"><path d="M6 1.500H1.500V10H12.500V8M4 12.500H10M9.500 0V6.500M7 4.500 9.500 7 12 4.500" /></svg></NavCell>
          <NavCell $w={29}><svg width="14" height="14" fill="none" stroke="#4c6069" strokeWidth="1.200"><path d="M3 3.500H1V12.500H11V10M9 1.500 13 5 9 8.500V6.500Q5.500 6.500 4 9.500 4.300 4 9 3.500z" /></svg></NavCell>
          <NavCell $w={29}><MdStarBorder size={16} /></NavCell>
        </Omnibox>
        <NavCell $w={39}><MdExtension size={15} /></NavCell>
        <NavCell $w={19}><MdQueueMusic size={18} /></NavCell>
        <NavCell $w={39}><svg width="13" height="12"><path d="M1 1H12V11H1z" fill="none" stroke="#4c6069" strokeWidth="2" /><path d="M8 1H12V11H8z" fill="#4c6069" /></svg></NavCell>
        <NavCell $w={20}>
          <svg width="20" height="20" viewBox="0 0 20 20"><circle cx="10" cy="10" r="10" fill="#d5d5d6" /><path d="M7 2q5-3 10 2l2 6-4 5-3-3-1 7-3-6 2-3-4-2z" fill="#1a2026" /><path d="m11 3-1 7 3 2" stroke="#8d9296" fill="none" /></svg>
        </NavCell>
        <NavCell $w={36}><MdMoreVert size={17} /></NavCell>
      </AddressRow>
      <Bookmarks>
        {bookmarks.map((b, i) => <BookmarkCell key={i}>{b}</BookmarkCell>)}
        <OtherBookmarks>
          <svg width="11" height="14"><path d="M0 1H11V13H0z" fill="#fbdf83" /><path d="M8.500 10H11V13H8.500z" fill="#e9c250" /></svg>
          Other bookmarks
        </OtherBookmarks>
      </Bookmarks>
      <Header>
        <LogoGrid>{tiles.map(([l, c]) => <LogoTile key={l} $c={c}>{l}</LogoTile>)}</LogoGrid>
        <svg width="21" height="20" viewBox="0 0 21 20" style={{ marginTop: -3 }}>
          <path d="M1 1.500H20V18.500H1z" fill="#fff" stroke="#171a1c" strokeWidth="1.500" />
          <path d="M4 6h2.500M4 10h2.500M4 14h2.500M8 6h9M8 10h9M8 14h9" stroke="#171a1c" strokeWidth="2.200" />
        </svg>
        <DesignName>Plastrans</DesignName>
        <HeaderModes />
      </Header>
      <Toolbar>
        <LeftTools />
        <RightTools />
        <Actions>
          <ActionButton>Import</ActionButton>
          <ActionButton>Export</ActionButton>
          <ActionButton>Send To</ActionButton>
        </Actions>
      </Toolbar>
      <Viewport>
        <Workspace />
        <PlaneLabel style={{ transform: labelMatrix() }}>Workplane</PlaneLabel>
        <ViewNav />
        <PanelHandle><svg width="8" height="14"><path d="M6.500 1 2 7 6.500 13" fill="none" stroke="#2c3a47" strokeWidth="1.600" /></svg></PanelHandle>
        <BottomControls>
          <GridBox $w={81}>Edit Grid</GridBox>
          <SnapRow><SnapLabel>Snap Grid</SnapLabel><GridBox $w={65}>1.0 mm<svg width="6" height="4"><path d="M0 4 3 0 6 4z" fill="#3c4754" /></svg></GridBox></SnapRow>
        </BottomControls>
      </Viewport>
      <Taskbar>
        {tasks.map((t, i) => <TaskCell key={i} $open={t.open} $active={t.active}><App3>{t.art}</App3></TaskCell>)}
        <Tray>
          <TrayIcons />
          <Clock>20:36<br />08/05/2022</Clock>
          <Notification>
            <svg width="47" height="35" viewBox="689 209 141 105">
              <path d="M730 240h44v30h-26l-8 9v-9h-10z" fill="#fff" /><path d="M738 252h27M738 260h20" stroke="#55504d" strokeWidth="3" />
              <circle cx="770" cy="280" r="20" fill="#343638" stroke="#8b8e90" strokeWidth="2.500" />
              <text x="770" y="290" fontSize="28" fill="#fff" textAnchor="middle" fontFamily="Open Sans, sans-serif">2</text>
            </svg>
          </Notification>
          <DesktopEdge />
        </Tray>
      </Taskbar>
    </Screen>
  );
}
